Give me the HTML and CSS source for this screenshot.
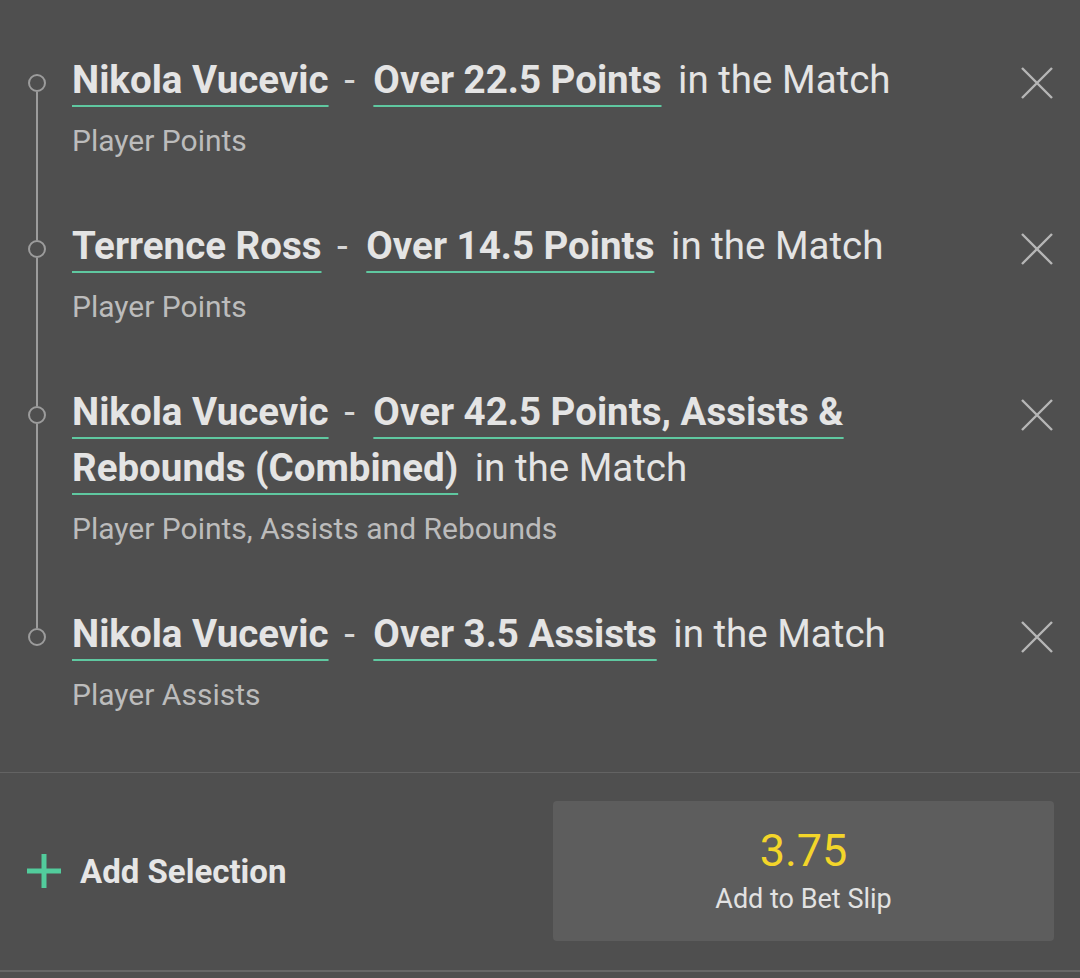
FILE: index.html
```html
<!DOCTYPE html>
<html lang="en">
<head>
  <meta charset="UTF-8">
  <meta name="viewport" content="width=device-width, initial-scale=1.0">
  <title>Bet Builder</title>
  <link rel="stylesheet" href="styles.css">
</head>
<body>
  <main class="builder">
    <ul class="legs">
      <li class="leg">
        <div class="leg-body">
          <p class="leg-title"><span class="pick">Nikola Vucevic</span> <span class="sep">-</span> <span class="pick">Over 22.5 Points</span> <span class="rest">in the Match</span></p>
          <p class="leg-market">Player Points</p>
        </div>
        <button class="leg-remove" aria-label="Remove">
          <svg viewBox="0 0 32 32" width="32" height="32"><path d="M1 1L31 31M31 1L1 31"/></svg>
        </button>
      </li>
      <li class="leg">
        <div class="leg-body">
          <p class="leg-title"><span class="pick">Terrence Ross</span> <span class="sep">-</span> <span class="pick">Over 14.5 Points</span> <span class="rest">in the Match</span></p>
          <p class="leg-market">Player Points</p>
        </div>
        <button class="leg-remove" aria-label="Remove">
          <svg viewBox="0 0 32 32" width="32" height="32"><path d="M1 1L31 31M31 1L1 31"/></svg>
        </button>
      </li>
      <li class="leg">
        <div class="leg-body">
          <p class="leg-title"><span class="pick">Nikola Vucevic</span> <span class="sep">-</span> <span class="pick">Over 42.5 Points, Assists &amp; Rebounds (Combined)</span> <span class="rest">in the Match</span></p>
          <p class="leg-market">Player Points, Assists and Rebounds</p>
        </div>
        <button class="leg-remove" aria-label="Remove">
          <svg viewBox="0 0 32 32" width="32" height="32"><path d="M1 1L31 31M31 1L1 31"/></svg>
        </button>
      </li>
      <li class="leg">
        <div class="leg-body">
          <p class="leg-title"><span class="pick">Nikola Vucevic</span> <span class="sep">-</span> <span class="pick">Over 3.5 Assists</span> <span class="rest">in the Match</span></p>
          <p class="leg-market">Player Assists</p>
        </div>
        <button class="leg-remove" aria-label="Remove">
          <svg viewBox="0 0 32 32" width="32" height="32"><path d="M1 1L31 31M31 1L1 31"/></svg>
        </button>
      </li>
    </ul>

    <footer class="builder-foot">
      <button class="add-selection">
        <svg viewBox="0 0 34 34" width="34" height="34"><path d="M0 17H34M17 0V34"/></svg>
        <span>Add Selection</span>
      </button>
      <button class="add-slip">
        <span class="odds">3.75</span>
        <span class="slip-label">Add to Bet Slip</span>
      </button>
    </footer>
  </main>
</body>
</html>
```

FILE: styles.css
```css
body { margin: 0; background: #4f4f4f; font-family: Roboto, "Liberation Sans", sans-serif; color: #e4e4e4; }
button { font-family: inherit; background: none; border: none; padding: 0; cursor: pointer; }

.legs { list-style: none; margin: 0; padding: 52px 0 0; }
.leg { position: relative; display: flex; align-items: flex-start; padding: 0 27px 59px 72px; }
.leg::before { content: ""; position: absolute; left: 28px; top: 22px; width: 18px; height: 18px; box-sizing: border-box; border: 2px solid #9c9c9c; border-radius: 50%; }
.leg::after { content: ""; position: absolute; left: 36px; top: 40px; bottom: -22px; width: 2px; background: #9c9c9c; }
.leg:last-child::after { display: none; }

.leg-body { flex: 1; margin-right: 20px; }
.leg-title { margin: 0; font-size: 38.5px; line-height: 56px; font-weight: 700; color: #e4e4e4; }
.pick { text-decoration: underline; text-decoration-color: #5fc8a0; text-decoration-thickness: 2px; text-underline-offset: 12px; text-decoration-skip-ink: none; }
.sep { font-weight: 400; margin: 0 9px 0 6px; color: #d6d6d6; }
.rest { font-weight: 400; margin-left: 7px; }
.leg-market { margin: 15px 0 0; font-size: 30px; line-height: 36px; color: #bcbcbc; }

.leg-remove { margin-top: 15px; width: 32px; height: 32px; }
.leg-remove svg { display: block; stroke: #b6b6b6; stroke-width: 2.4; fill: none; }

.builder-foot { display: flex; align-items: center; justify-content: space-between; padding: 28px 26px 29px 27px; border-top: 1px solid #636363; border-bottom: 2px solid #676767; margin-bottom: 6px; }
.add-selection { display: flex; align-items: center; gap: 19px; font-size: 33px; font-weight: 700; color: #e6e6e6; }
.add-selection svg { display: block; stroke: #52cc9c; stroke-width: 5; fill: none; }
.add-slip { width: 501px; height: 140px; background: #5d5d5d; border-radius: 4px; display: flex; flex-direction: column; align-items: center; justify-content: center; }
.odds { font-size: 45px; line-height: 48px; color: #f3d52a; }
.slip-label { margin-top: 8px; font-size: 27px; line-height: 32px; color: #e2e2e2; }
```
